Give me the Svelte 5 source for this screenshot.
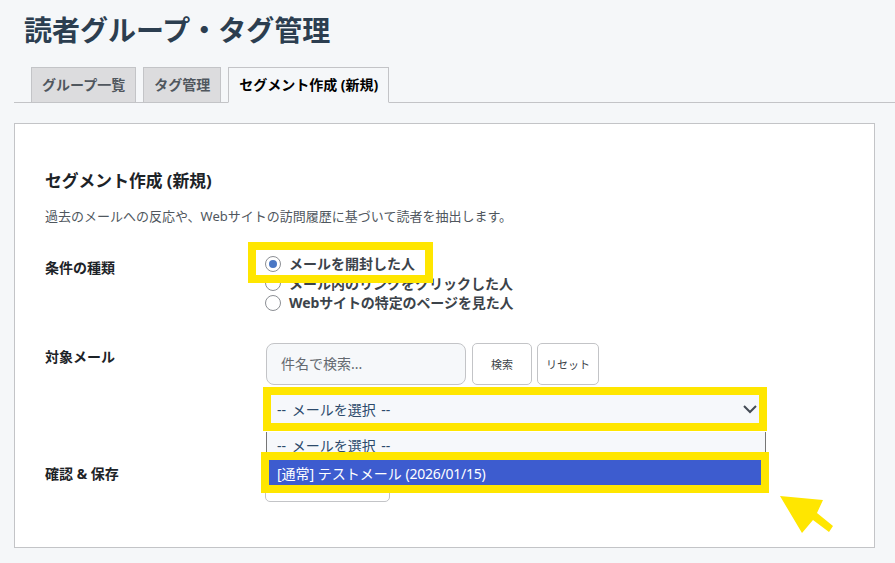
<script>
  const tabs = [
    { label: 'グループ一覧', active: false },
    { label: 'タグ管理', active: false },
    { label: 'セグメント作成 (新規)', active: true }
  ];
  const radios = ['メールを開封した人', 'メール内のリンクをクリックした人', 'Webサイトの特定のページを見た人'];
</script>

<div class="page">
  <h1>読者グループ・タグ管理</h1>

  <nav class="tabs">
    {#each tabs as tab}
      <span class="tab" class:active={tab.active}>{tab.label}</span>
    {/each}
  </nav>

  <section class="card">
    <h2>セグメント作成 (新規)</h2>
    <p class="desc">過去のメールへの反応や、Webサイトの訪問履歴に基づいて読者を抽出します。</p>

    <div class="row type-row">
      <div class="label">条件の種類</div>
      <div class="radios">
        {#each radios as text, i}
          <label class="radio">
            <span class="dot" class:on={i === 0}></span>
            <span class="radio-text">{text}</span>
          </label>
        {/each}
        <div class="mark mark-radio"></div>
      </div>
    </div>

    <div class="row mail-row">
      <div class="label">対象メール</div>
      <div class="field">
        <div class="search">
          <div class="input">件名で検索...</div>
          <span class="btn">検索</span>
          <span class="btn">リセット</span>
        </div>
        <div class="select">
          <span class="dashed">-- メールを選択 --</span>
          <svg width="14" height="10" viewBox="0 0 14 10"><path d="M1 2 L7 8 L13 2" fill="none" stroke="#444b55" stroke-width="2"/></svg>
          <div class="mark mark-select"></div>
          <div class="list">
            <div class="opt"><span class="dashed">-- メールを選択 --</span></div>
            <div class="opt selected"><span>[通常] テストメール <span class="date">(2026/01/15)</span></span></div>
          </div>
          <div class="mark mark-option"></div>
        </div>
      </div>
    </div>

    <div class="row save-row">
      <div class="label">確認 &amp; 保存</div>
      <div class="save-btn"></div>
    </div>

    <svg class="arrow" width="56" height="40" viewBox="0 0 56 40">
      <path d="M0 0 L43 4 L37 17 L53 30 L49 36 L33 24 L22 37 Z" fill="#ffe600"/>
    </svg>
  </section>
</div>

<style>
  :global(body) {
    margin: 0;
    background: #f5f7f9;
  }

  .page {
    width: 895px;
    height: 563px;
    overflow: hidden;
    box-sizing: border-box;
    padding: 9px 20px 0 14px;
    font-family: "Noto Sans", "Noto Sans CJK JP", sans-serif;
    color: #333;
  }

  h1 {
    margin: 0 0 0 10px;
    font-size: 28px;
    line-height: 42px;
    font-weight: 700;
    color: #2c3e50;
  }

  .tabs {
    display: flex;
    gap: 7px;
    margin-top: 16px;
    padding-left: 17px;
    height: 35px;
    width: 881px;
    box-sizing: content-box;
    border-bottom: 1px solid #c3c4c7;
  }

  .tab {
    box-sizing: border-box;
    height: 36px;
    padding: 0 10px 2px;
    display: flex;
    align-items: center;
    border: 1px solid #c3c4c7;
    background: #dcdcde;
    color: #50575e;
    font-size: 14px;
    font-weight: 700;
  }

  .tab.active {
    background: #f5f7f9;
    border-bottom-color: #f5f7f9;
    color: #000;
  }

  .card {
    position: relative;
    box-sizing: border-box;
    width: 861px;
    height: 425px;
    margin-top: 20px;
    padding: 45px 30px 0;
    background: #fff;
    border: 1px solid #c3c4c7;
  }

  h2 {
    margin: 0;
    font-size: 16.8px;
    line-height: 24px;
    font-weight: 700;
    color: #1d2327;
  }

  .desc {
    margin: 13px 0 0;
    font-size: 13px;
    line-height: 20px;
    color: #50575e;
  }

  .row {
    display: flex;
  }

  .label {
    width: 220px;
    flex-shrink: 0;
    padding-top: 1px;
    font-size: 14px;
    font-weight: 700;
    line-height: 20px;
    color: #1d2327;
  }

  .type-row {
    margin-top: 31px;
  }

  .radios {
    position: relative;
    display: flex;
    flex-direction: column;
    margin-top: -3px;
    font-size: 14px;
    font-weight: 700;
    line-height: 19.5px;
    color: #3c434a;
  }

  .radio {
    display: flex;
    align-items: center;
    gap: 8px;
  }

  .radio:nth-child(3) .radio-text {
    letter-spacing: -0.1px;
  }

  .dot {
    box-sizing: border-box;
    width: 16px;
    height: 16px;
    border: 1px solid #8c8f94;
    border-radius: 50%;
    background: #fff;
    position: relative;
  }

  .dot.on::after {
    content: '';
    position: absolute;
    inset: 3px;
    border-radius: 50%;
    background: #4a77c4;
  }

  .mark {
    position: absolute;
    box-sizing: border-box;
    border: 8px solid #ffe600;
    pointer-events: none;
  }

  .mark-radio {
    left: -17px;
    top: -12px;
    width: 185px;
    height: 41px;
  }

  .mail-row {
    margin-top: 30.5px;
  }

  .mail-row .label {
    padding-top: 4px;
  }

  .field {
    width: 500px;
    margin-left: 1px;
  }

  .search {
    display: flex;
    gap: 5px;
  }

  .input {
    box-sizing: border-box;
    width: 200px;
    height: 42px;
    margin-right: 1px;
    padding: 0 14px 2px;
    display: flex;
    align-items: center;
    border: 1px solid #c3c4c7;
    border-radius: 8px;
    background: #f6f8fa;
    color: #646970;
    font-size: 14px;
  }

  .btn {
    box-sizing: border-box;
    height: 42px;
    width: 60px;
    display: flex;
    align-items: center;
    justify-content: center;
    border: 1px solid #c3c4c7;
    border-radius: 5px;
    background: #fff;
    color: #3c434a;
    font-size: 11px;
  }

  .btn:last-child {
    width: 62px;
  }

  .select {
    position: relative;
    box-sizing: border-box;
    width: 500px;
    height: 32px;
    margin-top: 8px;
    padding: 0 9px 0 11px;
    display: flex;
    align-items: center;
    justify-content: space-between;
    background: #f6f8fb;
    color: #2c4a6b;
    font-size: 14px;
  }

  .dashed {
    word-spacing: 2px;
  }

  .date {
    letter-spacing: -0.25px;
  }

  .mark-select {
    left: -3px;
    top: -6px;
    width: 504px;
    height: 44px;
  }

  .list {
    position: absolute;
    left: 0;
    top: 39px;
    width: 500px;
    box-sizing: border-box;
    border-left: 1px solid #767676;
    border-right: 1px solid #767676;
    background: #f6f8fb;
    z-index: 1;
  }

  .opt {
    box-sizing: border-box;
    height: 28px;
    padding: 0 0 2px 10px;
    display: flex;
    align-items: center;
    font-size: 14px;
    color: #2c4a6b;
  }

  .selected {
    background: #3d5ccf;
    color: #fff;
  }

  .mark-option {
    left: -5px;
    top: 59px;
    width: 508px;
    height: 41px;
    z-index: 2;
  }

  .save-row {
    margin-top: 38px;
  }

  .save-btn {
    box-sizing: border-box;
    width: 125px;
    height: 39px;
    border: 1px solid #c3c4c7;
    border-radius: 5px;
    background: #fff;
  }

  .arrow {
    position: absolute;
    left: 765px;
    top: 372px;
  }
</style>
